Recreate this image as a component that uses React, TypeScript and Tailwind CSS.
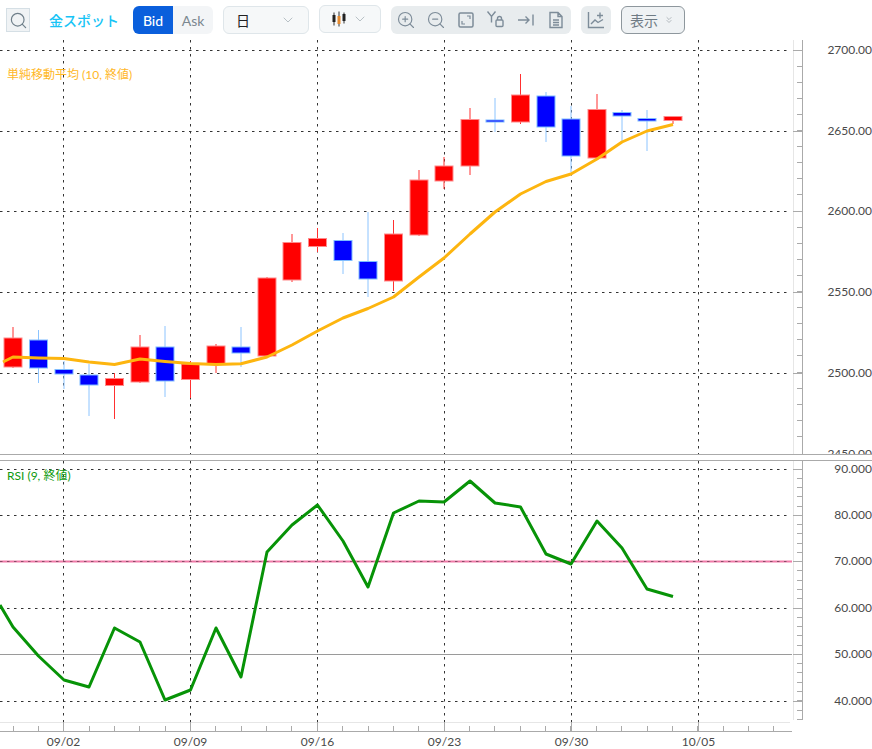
import { Search, ZoomIn, ZoomOut, ChevronDown, ChevronsDown } from "lucide-react";

// [x, bodyTop, bodyBottom, wickTop, wickBottom, isRed]
const candles: [number, number, number, number, number, boolean][] = [
  [13, 338, 367, 327, 368, true],
  [38.5, 340, 368, 330, 383, false],
  [64, 369.5, 374, 361, 389, false],
  [89, 375, 385, 364, 416, false],
  [114.5, 378.5, 385.5, 373, 419, true],
  [140, 347, 382, 335, 383, true],
  [165, 347, 381, 326, 397, false],
  [190.5, 364, 379.5, 361, 398, true],
  [216, 346, 364, 344, 373, true],
  [241, 347, 353, 327, 367, false],
  [267, 278, 356, 277, 357, true],
  [292, 242.5, 280, 234, 282, true],
  [317.5, 238.5, 246.5, 228, 252, true],
  [343, 240.5, 260.5, 233, 274, false],
  [368, 261.5, 279, 212, 297, false],
  [393.5, 234, 281, 220, 291, true],
  [419, 180, 235, 170, 236, true],
  [444, 166, 181, 157, 189, true],
  [470, 119.5, 166, 108, 175, true],
  [495, 120, 122, 98, 132, false],
  [520.5, 95, 122, 74, 124, true],
  [546, 96, 127, 92, 142, false],
  [571, 119, 156, 106, 172, false],
  [597, 109.5, 158, 94, 158, true],
  [622, 112.5, 116, 110, 143, false],
  [647, 118.5, 121, 110, 151, false],
  [673, 116.5, 120.5, 116, 124, true],
];

const ma =
  "3,362 13,357 38.5,358 64,358.5 89,362 114.5,364.5 140,359 165,361.5 190.5,363.5 216,364.5 241,363.7 267,357 292,345 317.5,331 343,318 368,308.5 393.5,297 419,277 444,258 470,234 495,212 520.5,194 546,181.5 571,174 597,159 622,142 647,131 673,124.5";

const rsi =
  "0,605 13,627 38.5,656 64,680 89,687 114.5,628 140,642 165,700 190.5,690 216,628 241,677 267,552 292,525 317.5,505 343,541 368,587 393.5,513 419,501 444,502 470,481 495,503 520.5,507 546,554 571,564 597,521 622,548 647,589 673,596.5";

const priceLabels = [
  { y: 50.5, t: "2700.00" },
  { y: 131.5, t: "2650.00" },
  { y: 211.5, t: "2600.00" },
  { y: 292.5, t: "2550.00" },
  { y: 373.5, t: "2500.00" },
];
const rsiLabels = [
  { y: 469.5, t: "90.000" },
  { y: 515.5, t: "80.000" },
  { y: 561.5, t: "70.000" },
  { y: 608.5, t: "60.000" },
  { y: 654.5, t: "50.000" },
  { y: 701.5, t: "40.000" },
];
const dates = [
  { x: 63.5, t: "09/02" },
  { x: 190.5, t: "09/09" },
  { x: 317.5, t: "09/16" },
  { x: 444.5, t: "09/23" },
  { x: 571.5, t: "09/30" },
  { x: 698.5, t: "10/05" },
];

const priceTicks = Array.from({ length: 25 }, (_, i) => Math.floor(50 + i * 16.1) + 0.5);
const rsiTicks = Array.from({ length: 28 }, (_, i) => Math.floor(469 + i * 9.27) + 0.5);
const timeTicks = Array.from({ length: 31 }, (_, i) => Math.floor(13 + i * 25.36) + 0.5);

const ToolIcon = ({ children }: { children: React.ReactNode }) => (
  <svg width="20" height="20" viewBox="0 0 20 20" fill="none" stroke="#7d8c99" strokeWidth="1.4" className="shrink-0">
    {children}
  </svg>
);

const Toolbar = () => (
  <div className="flex h-10 shrink-0 items-center pl-1.5 text-[14px]">
    <button className="flex h-6 w-6 items-center justify-center border border-[#d5dfe5] bg-[#f0f3f5]">
      <Search size={19} strokeWidth={1.5} className="text-[#6f7f8a]" />
    </button>
    <span className="ml-[19px] w-[84px] text-[14px] font-medium text-[#17c4f6]">金スポット</span>
    <div className="flex h-7 text-[14px]">
      <span className="flex w-10 items-center justify-center rounded-l-md bg-[#0a5fdc] font-medium text-white">Bid</span>
      <span className="flex w-10 items-center justify-center rounded-r-md bg-[#f3f5f7] text-[#7b8790]">Ask</span>
    </div>
    <div className="ml-2.5 flex h-7 w-[86px] items-center justify-between rounded-md border border-[#dfe6ea] bg-[#f6f8f9] pl-3 pr-3">
      <span className="text-[14px] text-[#222]">日</span>
      <ChevronDown size={16} strokeWidth={1.2} className="text-[#a8b2b9]" />
    </div>
    <div className="ml-2.5 mb-0.5 flex h-7 w-[62px] items-center justify-between rounded-md border border-[#dfe6ea] bg-[#f6f8f9] pl-3 pr-3">
      <svg width="14" height="16" viewBox="0 0 14 16" className="shrink-0">
        <path d="M2 1.500v13M7 0.500v15M12 1.500v11" stroke="#333" strokeWidth="1" />
        <rect x="0.500" y="4" width="3" height="7" fill="#222" />
        <rect x="5.500" y="5" width="3" height="8" fill="#e58a2e" />
        <rect x="10.500" y="3" width="3" height="7" fill="#222" />
      </svg>
      <ChevronDown size={16} strokeWidth={1.2} className="text-[#a8b2b9]" />
    </div>
    <div className="ml-2.5 flex h-7 w-[180px] items-center justify-between rounded-md bg-[#e8ecee] px-[5px]">
      <ZoomIn size={20} strokeWidth={1.4} className="text-[#7d8c99]" />
      <ZoomOut size={20} strokeWidth={1.4} className="text-[#7d8c99]" />
      <ToolIcon>
        <rect x="3" y="3" width="14" height="14" rx="1.500" strokeWidth="1.500" />
        <path d="M11 6h3v3M6 11v3h3" strokeWidth="1.200" />
      </ToolIcon>
      <ToolIcon>
        <path d="M1.500 1.500l4 5 4-5M5.500 6.500v6" />
        <rect x="10" y="10" width="7" height="6.500" rx="1" />
        <path d="M11.500 10V8.500a2 2 0 0 1 4 0V10" />
      </ToolIcon>
      <ToolIcon>
        <path d="M2 10h11M9.500 6.500L13 10l-3.500 3.500M17 4.500v11" />
      </ToolIcon>
      <ToolIcon>
        <path d="M4 2.500h8l4 4v11H4zM12 2.500v4h4M7 10h6M7 12.500h6M7 15h6" />
      </ToolIcon>
    </div>
    <div className="ml-2.5 flex h-7 w-[30px] items-center justify-center rounded-md bg-[#e8ecee]">
      <ToolIcon>
        <path d="M2.500 2v15.500H18M5 14l4-4 3 2.500 5-3M14 2.500v6M11 5.500h6" />
      </ToolIcon>
    </div>
    <button className="ml-2.5 flex h-7 w-16 items-center gap-1 rounded-md border border-[#8e979d] bg-[#eff2f4] pl-2 text-[14px] text-[#6f7b84]">
      表示
      <ChevronsDown size={10} strokeWidth={1.5} className="ml-0.5 text-[#8e979d]" />
    </button>
  </div>
);

const Chart = () => (
  <svg width="872" height="709" viewBox="0 40 872 709" className="block shrink-0">
    {/* price grid */}
    <g stroke="#333" strokeWidth="1" strokeDasharray="2.500 4.500">
      {priceLabels.map((l) => (
        <line key={l.t} x1="0" x2="789" y1={l.y} y2={l.y} />
      ))}
      {rsiLabels
        .filter((l) => l.t !== "70.000" && l.t !== "50.000")
        .map((l) => (
          <line key={l.t} x1="0" x2="789" y1={l.y} y2={l.y} />
        ))}
      {dates.map((d) => (
        <g key={d.t}>
          <line x1={d.x} x2={d.x} y1="40" y2="454" />
          <line x1={d.x} x2={d.x} y1="461" y2="722" />
        </g>
      ))}
    </g>
    <line x1="0" x2="792" y1="561.500" y2="561.500" stroke="#f07aa8" strokeWidth="2" />
    <line x1="0" x2="789" y1="561.500" y2="561.500" stroke="#8a4a66" strokeDasharray="2.500 4.500" />
    <line x1="0" x2="792" y1="654.500" y2="654.500" stroke="#9a9a9a" />

    {/* candles */}
    {candles.map(([x, top, bottom, hi, lo, red]) => (
      <g key={x}>
        <line x1={x} x2={x} y1={hi} y2={lo} stroke={red ? "#ff3030" : "#8cc4ff"} strokeWidth="1" />
        <rect
          x={x - 9}
          y={top}
          width="18"
          height={bottom - top}
          fill={red ? "#ff0000" : "#0000ff"}
          stroke={red ? "#ff8a8a" : "#7fbcff"}
          strokeWidth="1"
        />
      </g>
    ))}

    <polyline points={ma} fill="none" stroke="#fdb50f" strokeWidth="3" strokeLinejoin="round" />
    <polyline points={rsi} fill="none" stroke="#079307" strokeWidth="3" strokeLinejoin="round" />

    {/* labels */}
    <g className="font-['Lato','Noto_Sans_CJK_JP',sans-serif] text-[12px]">
      <text x="7" y="79" fill="#ffb727">単純移動平均 (10, 終値)</text>
      <text x="7" y="480" fill="#0f9a0f">RSI (9, 終値)</text>
      {priceLabels.map((l) => (
        <text key={l.t} x="872" y={l.y + 3.5} textAnchor="end" fill="#4a4a4a">{l.t}</text>
      ))}
      <text x="872" y="458" textAnchor="end" fill="#4a4a4a">2450.00</text>
      {rsiLabels.map((l) => (
        <text key={l.t} x="872" y={l.y + 3.5} textAnchor="end" fill="#4a4a4a">{l.t}</text>
      ))}
      {dates.map((d) => (
        <text key={d.t} x={d.x} y="746" textAnchor="middle" fill="#4a4a4a">{d.t}</text>
      ))}
    </g>
    <rect x="0" y="455" width="872" height="6" fill="white" />

    {/* axes */}
    <g stroke="#e6e6e6">
      <line x1="793.500" x2="793.500" y1="40" y2="454" />
      <line x1="793.500" x2="793.500" y1="461" y2="720" />
      <line x1="0" x2="790" y1="722.500" y2="722.500" />
    </g>
    <g stroke="#aaa">
      <line x1="802.500" x2="802.500" y1="40" y2="454" />
      <line x1="802.500" x2="802.500" y1="461" y2="720" />
      {priceTicks.map((y) => (
        <line key={y} x1="797" x2="802" y1={y} y2={y} />
      ))}
      {rsiTicks.map((y) => (
        <line key={y} x1="797" x2="802" y1={y} y2={y} />
      ))}
      {[...priceLabels, ...rsiLabels].map((l) => (
        <line key={l.t} x1="793" x2="802" y1={l.y} y2={l.y} />
      ))}
      <line x1="0" x2="792" y1="731.500" y2="731.500" />
      {timeTicks.map((x) => (
        <line key={x} x1={x} x2={x} y1="726" y2="731" />
      ))}
      {dates.map((d) => (
        <line key={d.t} x1={d.x} x2={d.x} y1="722" y2="731" />
      ))}
      <line x1="0" x2="872" y1="454.500" y2="454.500" />
      <line x1="0" x2="872" y1="460.500" y2="460.500" />
    </g>
  </svg>
);

export default function App() {
  return (
    <div className="flex h-[749px] w-[872px] flex-col overflow-hidden bg-white font-['Lato','Noto_Sans_CJK_JP',sans-serif]">
      <Toolbar />
      <Chart />
    </div>
  );
}
